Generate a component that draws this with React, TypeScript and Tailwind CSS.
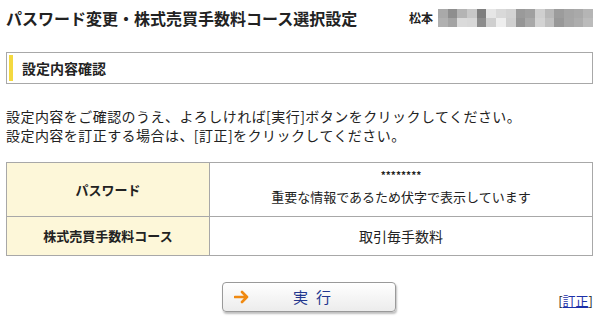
import React from 'react';

const mosaicTop = [
  'bg-[#a9a9a9]', 'bg-[#8e8e8e]', 'bg-[#b4b4b4]', 'bg-[#c8c8c8]', 'bg-[#7f7f7f]', 'bg-[#e6e6e6]', 'bg-[#d9d9d9]', 'bg-[#d3d3d3]',
  'bg-[#9a9a9a]', 'bg-[#a0a0a0]', 'bg-[#cfcfcf]', 'bg-[#b8b8b8]', 'bg-[#9c9c9c]', 'bg-[#a5a5a5]', 'bg-[#a9a9a9]', 'bg-[#b5b5b5]',
];
const mosaicBottom = [
  'bg-[#b0b0b0]', 'bg-[#a3a3a3]', 'bg-[#dadada]', 'bg-[#d8d8d8]', 'bg-[#8c8c8c]', 'bg-[#cfcfcf]', 'bg-[#eeeeee]', 'bg-[#d0d0d0]',
  'bg-[#959595]', 'bg-[#a8a8a8]', 'bg-[#d3d3d3]', 'bg-[#c0c0c0]', 'bg-[#989898]', 'bg-[#a6a6a6]', 'bg-[#adadad]', 'bg-[#bbbbbb]',
];

function NameMosaic() {
  return (
    <div className="grid grid-cols-16 w-[155px] h-[18px]">
      {[...mosaicTop, ...mosaicBottom].map((c, i) => (
        <div key={i} className={c} />
      ))}
    </div>
  );
}

export default function App() {
  return (
    <div
      className="w-[600px] h-[323px] bg-white text-[#222] pl-[6px] pr-[7px] overflow-hidden"
      style={{ fontFamily: '"Noto Sans CJK JP", "Noto Sans", sans-serif' }}
    >
      <header className="flex items-center justify-between h-[36px]">
        <h1 className="text-[16px] font-bold leading-none">パスワード変更・株式売買手数料コース選択設定</h1>
        <div className="flex items-center gap-[5px]">
          <span className="text-[12px] font-bold leading-none">松本</span>
          <NameMosaic />
        </div>
      </header>

      <div className="mt-[16px] h-[32px] border border-[#a8a8a8] p-[2px] flex">
        <div className="w-[4px] bg-[#f4d940]" />
        <p className="ml-[9px] self-center text-[14px] font-bold leading-none">設定内容確認</p>
      </div>

      <div className="mt-[23px] text-[14px] leading-[19px] tracking-[0.45px]">
        <p>設定内容をご確認のうえ、よろしければ[実行]ボタンをクリックしてください。</p>
        <p>設定内容を訂正する場合は、[訂正]をクリックしてください。</p>
      </div>

      <table className="mt-[17px] w-full border-collapse border border-[#a8a8a8]">
        <tbody>
          <tr className="h-[54px]">
            <th className="w-[203px] bg-[#fdf7d9] border border-[#a8a8a8] text-[13px] font-bold">パスワード</th>
            <td className="border border-[#a8a8a8] text-center align-top pt-[7px]">
              <div className="text-[10px] font-bold leading-[10px]">********</div>
              <div className="mt-[10px] text-[13px] leading-none">重要な情報であるため伏字で表示しています</div>
            </td>
          </tr>
          <tr className="h-[39px]">
            <th className="bg-[#fdf7d9] border border-[#a8a8a8] text-[13px] font-bold">株式売買手数料コース</th>
            <td className="border border-[#a8a8a8] text-center text-[14px]">取引毎手数料</td>
          </tr>
        </tbody>
      </table>

      <div className="mt-[26px] flex items-center">
        <button className="ml-[216px] w-[174px] h-[30px] rounded-[4px] border border-[#9a9a9a] bg-gradient-to-b from-white to-[#ececec] shadow-[1px_2px_2px_rgba(0,0,0,0.25)] flex items-center">
          <svg className="ml-[11px]" width="16" height="14" viewBox="0 0 16 14">
            <path d="M1 7h12M8 2l5 5-5 5" fill="none" stroke="#f08a12" strokeWidth="2.6" strokeLinecap="round" strokeLinejoin="round" />
          </svg>
          <span className="ml-[43px] text-[15px] text-[#23378e] tracking-[8px]">実行</span>
        </button>
        <span className="ml-auto mt-[8px] text-[13px]">
          [<a href="#" className="text-[#1c2fa8] underline">訂正</a>]
        </span>
      </div>
    </div>
  );
}
